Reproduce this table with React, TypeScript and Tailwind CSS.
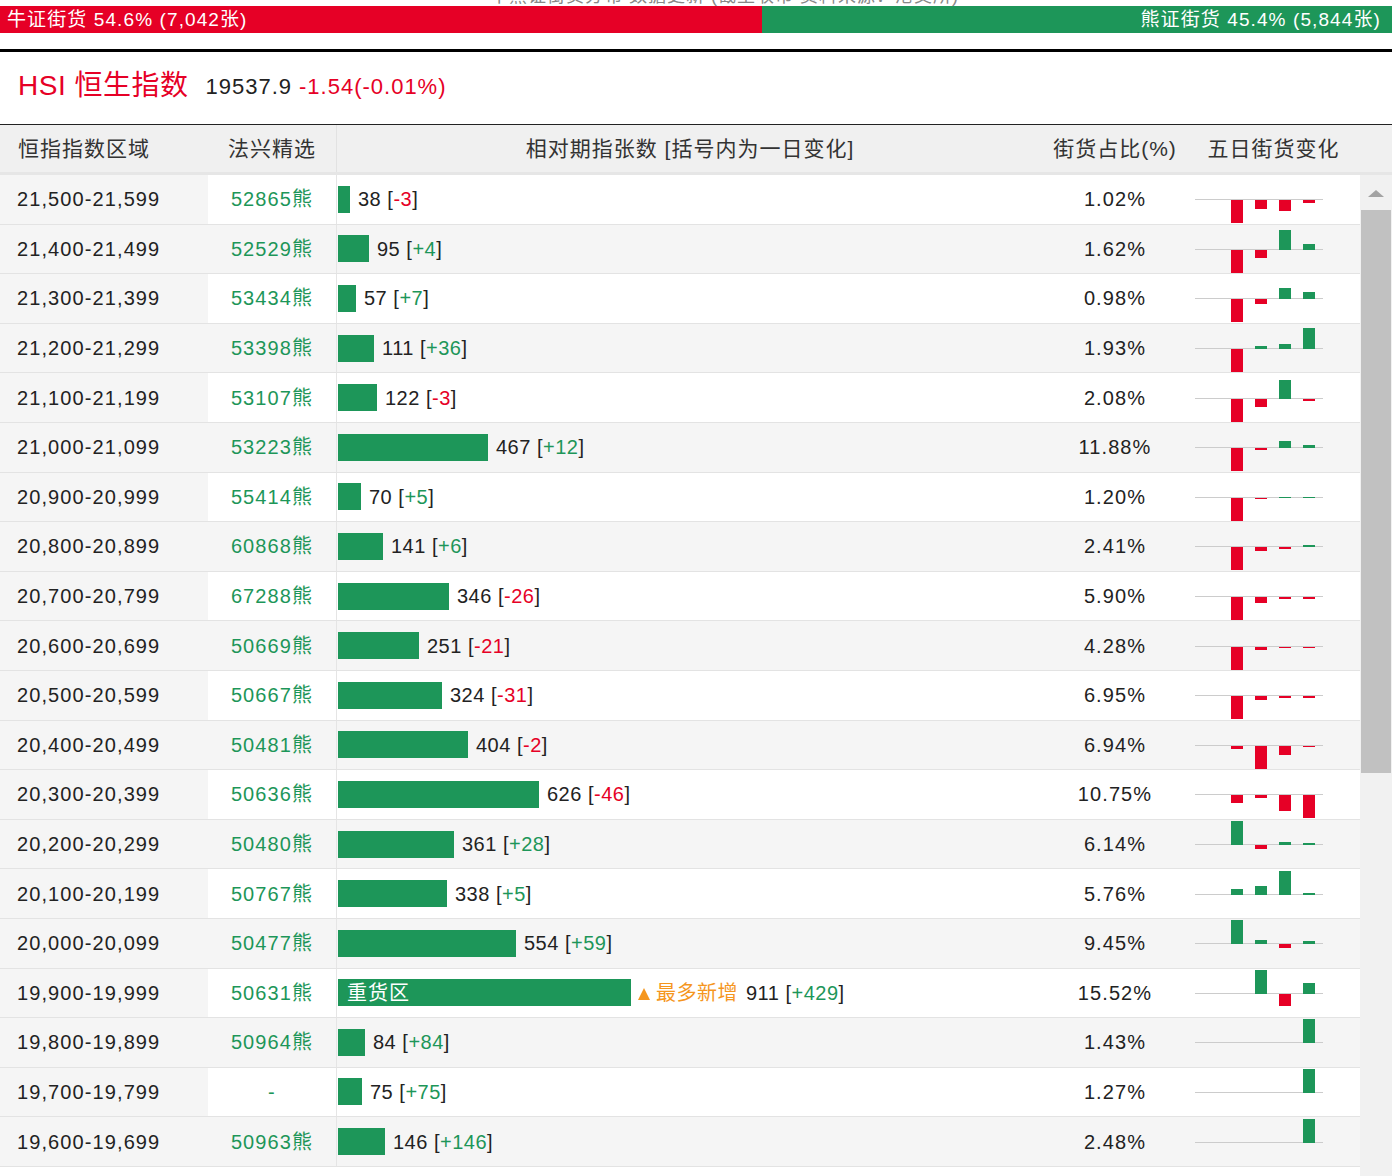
import React from "react";

const GREEN = "#1d9659";
const RED = "#e60026";

type Row = {
  range: string;
  code: string;
  qty: number;
  chg: number;
  pct: string;
  spark: number[];
  heavy?: boolean;
};

const ROWS: Row[] = [
  { range: "21,500-21,599", code: "52865熊", qty: 38, chg: -3, pct: "1.02%", spark: [-24, -9, -11, -3] },
  { range: "21,400-21,499", code: "52529熊", qty: 95, chg: 4, pct: "1.62%", spark: [-24, -8, 20, 6] },
  { range: "21,300-21,399", code: "53434熊", qty: 57, chg: 7, pct: "0.98%", spark: [-24, -5, 11, 7] },
  { range: "21,200-21,299", code: "53398熊", qty: 111, chg: 36, pct: "1.93%", spark: [-24, 3, 5, 21] },
  { range: "21,100-21,199", code: "53107熊", qty: 122, chg: -3, pct: "2.08%", spark: [-24, -8, 19, -2] },
  { range: "21,000-21,099", code: "53223熊", qty: 467, chg: 12, pct: "11.88%", spark: [-24, -2, 7, 3] },
  { range: "20,900-20,999", code: "55414熊", qty: 70, chg: 5, pct: "1.20%", spark: [-24, -1, 1, 1] },
  { range: "20,800-20,899", code: "60868熊", qty: 141, chg: 6, pct: "2.41%", spark: [-24, -4, -2, 2] },
  { range: "20,700-20,799", code: "67288熊", qty: 346, chg: -26, pct: "5.90%", spark: [-24, -6, -2, -2] },
  { range: "20,600-20,699", code: "50669熊", qty: 251, chg: -21, pct: "4.28%", spark: [-24, -3, -1, -1] },
  { range: "20,500-20,599", code: "50667熊", qty: 324, chg: -31, pct: "6.95%", spark: [-24, -4, -2, -2] },
  { range: "20,400-20,499", code: "50481熊", qty: 404, chg: -2, pct: "6.94%", spark: [-3, -24, -9, -1] },
  { range: "20,300-20,399", code: "50636熊", qty: 626, chg: -46, pct: "10.75%", spark: [-8, -3, -16, -24] },
  { range: "20,200-20,299", code: "50480熊", qty: 361, chg: 28, pct: "6.14%", spark: [24, -4, 3, 2] },
  { range: "20,100-20,199", code: "50767熊", qty: 338, chg: 5, pct: "5.76%", spark: [6, 9, 24, 2] },
  { range: "20,000-20,099", code: "50477熊", qty: 554, chg: 59, pct: "9.45%", spark: [24, 4, -4, 3] },
  { range: "19,900-19,999", code: "50631熊", qty: 911, chg: 429, pct: "15.52%", spark: [0, 24, -12, 11], heavy: true },
  { range: "19,800-19,899", code: "50964熊", qty: 84, chg: 84, pct: "1.43%", spark: [0, 0, 0, 24] },
  { range: "19,700-19,799", code: "-", qty: 75, chg: 75, pct: "1.27%", spark: [0, 0, 0, 24] },
  { range: "19,600-19,699", code: "50963熊", qty: 146, chg: 146, pct: "2.48%", spark: [0, 0, 0, 24] },
];

function Spark({ values }: { values: number[] }) {
  return (
    <svg width="128" height="48" className="block">
      <line x1="0" x2="128" y1="24.5" y2="24.5" stroke="#cccccc" strokeWidth="1" />
      {values.map((h, i) => {
        if (h === 0) return null;
        const x = 36 + i * 24;
        return h > 0 ? (
          <rect key={i} x={x} y={25 - h} width="12" height={h} fill={GREEN} />
        ) : (
          <rect key={i} x={x} y={25} width="12" height={-h} fill={RED} />
        );
      })}
    </svg>
  );
}

function Change({ v }: { v: number }) {
  return (
    <span>
      [<span className={v < 0 ? "text-[#e60026]" : "text-[#1d9659]"}>{v < 0 ? v : `+${v}`}</span>]
    </span>
  );
}

function TableRow({ row, index }: { row: Row; index: number }) {
  const even = index % 2 === 1;
  const barWidth = Math.round(row.qty * 0.3217);

  return (
    <div
      className={`flex h-[49.6px] items-center border-b border-[#e3e3e3] ${
        even ? "bg-[#f5f5f5]" : "bg-white"
      }`}
    >
      <div className="flex h-full w-[208px] items-center bg-[#f5f5f5] pl-[17px]">{row.range}</div>
      <div className="flex h-full w-[129px] items-center justify-center border-r border-[#e5e5e5] text-[#1d9659]">
        {row.code}
      </div>
      <div className="flex h-full w-[706px] items-center pl-[1px] tracking-[0.5px]">
        <div
          className="flex h-[27px] shrink-0 items-center bg-[#1d9659] pl-[9px] tracking-[1px] text-white"
          style={{ width: barWidth }}
        >
          {row.heavy ? "重货区" : null}
        </div>
        {row.heavy && (
          <span className="ml-[7px] flex items-center text-[#f5961e]">
            <svg width="12" height="12" viewBox="0 0 12 12" className="mt-[3px] block">
              <polygon points="6,0 12,12 0,12" fill="#f5961e" />
            </svg>
            <span className="ml-[6px] tracking-[0.5px]">最多新增</span>
          </span>
        )}
        <span className="ml-[8px] whitespace-nowrap">
          {row.qty} <Change v={row.chg} />
        </span>
      </div>
      <div className="flex h-full w-[144px] items-center justify-center">{row.pct}</div>
      <div className="flex h-full w-[173px] items-center pl-[8px]">
        <Spark values={row.spark} />
      </div>
    </div>
  );
}

export default function App() {
  return (
    <div className="h-[1176px] w-[1398px] overflow-hidden bg-white font-['Liberation_Sans','Noto_Sans_CJK_SC',sans-serif] text-[#222]">
      <div className="w-[1392px]">
        {/* cut-off caption above the ratio bar */}
        <div className="relative h-[6px] overflow-hidden">
          <div className="absolute left-[490px] top-[-17px] whitespace-nowrap text-[18px] tracking-[1px] text-[#888]">
            牛熊证街货分布 数据更新 (截至收市 资料来源：港交所)
          </div>
        </div>

        {/* bull / bear ratio bar */}
        <div className="flex h-[27px] text-[19px] leading-[27px] tracking-[1.1px] text-white">
          <div className="w-[762px] bg-[#e60026] pl-[7px]">牛证街货 54.6% (7,042张)</div>
          <div className="flex-1 bg-[#1d9659] pr-[11px] text-right">熊证街货 45.4% (5,844张)</div>
        </div>

        <div className="mt-[16px] h-[3px] bg-black" />

        {/* index title */}
        <div className="flex h-[72px] items-center pb-[4px] pl-[18px]">
          <span className="text-[28px] tracking-[0.5px] text-[#e60026]">HSI 恒生指数</span>
          <span className="ml-[17px] text-[22px] tracking-[1px]">19537.9</span>
          <span className="ml-[7px] text-[22px] tracking-[1px] text-[#e60026]">-1.54(-0.01%)</span>
        </div>

        <div className="h-[1px] bg-[#222]" />

        {/* table header */}
        <div className="flex h-[50px] items-center border-b-[3px] border-[#e6e6e6] bg-[#f0f0f0] text-[21px] tracking-[1px] text-[#333]">
          <div className="w-[208px] pl-[18px]">恒指指数区域</div>
          <div className="flex h-full w-[129px] items-center justify-center border-r border-[#e2e2e2]">法兴精选</div>
          <div className="w-[706px] text-center">相对期指张数 [括号内为一日变化]</div>
          <div className="w-[144px] text-center">街货占比(%)</div>
          <div className="w-[173px] text-center">五日街货变化</div>
        </div>

        {/* table body */}
        <div className="flex h-[1001px]">
          <div className="w-[1360px] text-[20px] tracking-[1.1px]">
            {ROWS.map((row, i) => (
              <TableRow key={row.range} row={row} index={i} />
            ))}
          </div>
          <div className="flex w-[32px] flex-col bg-[#f1f1f1]">
            <div className="flex h-[35px] items-center justify-center pt-[2px]">
              <div className="h-0 w-0 border-x-[8px] border-b-[7px] border-x-transparent border-b-[#a3a3a3]" />
            </div>
            <div className="mx-[1px] h-[563px] bg-[#c1c1c1]" />
          </div>
        </div>
      </div>
    </div>
  );
}
